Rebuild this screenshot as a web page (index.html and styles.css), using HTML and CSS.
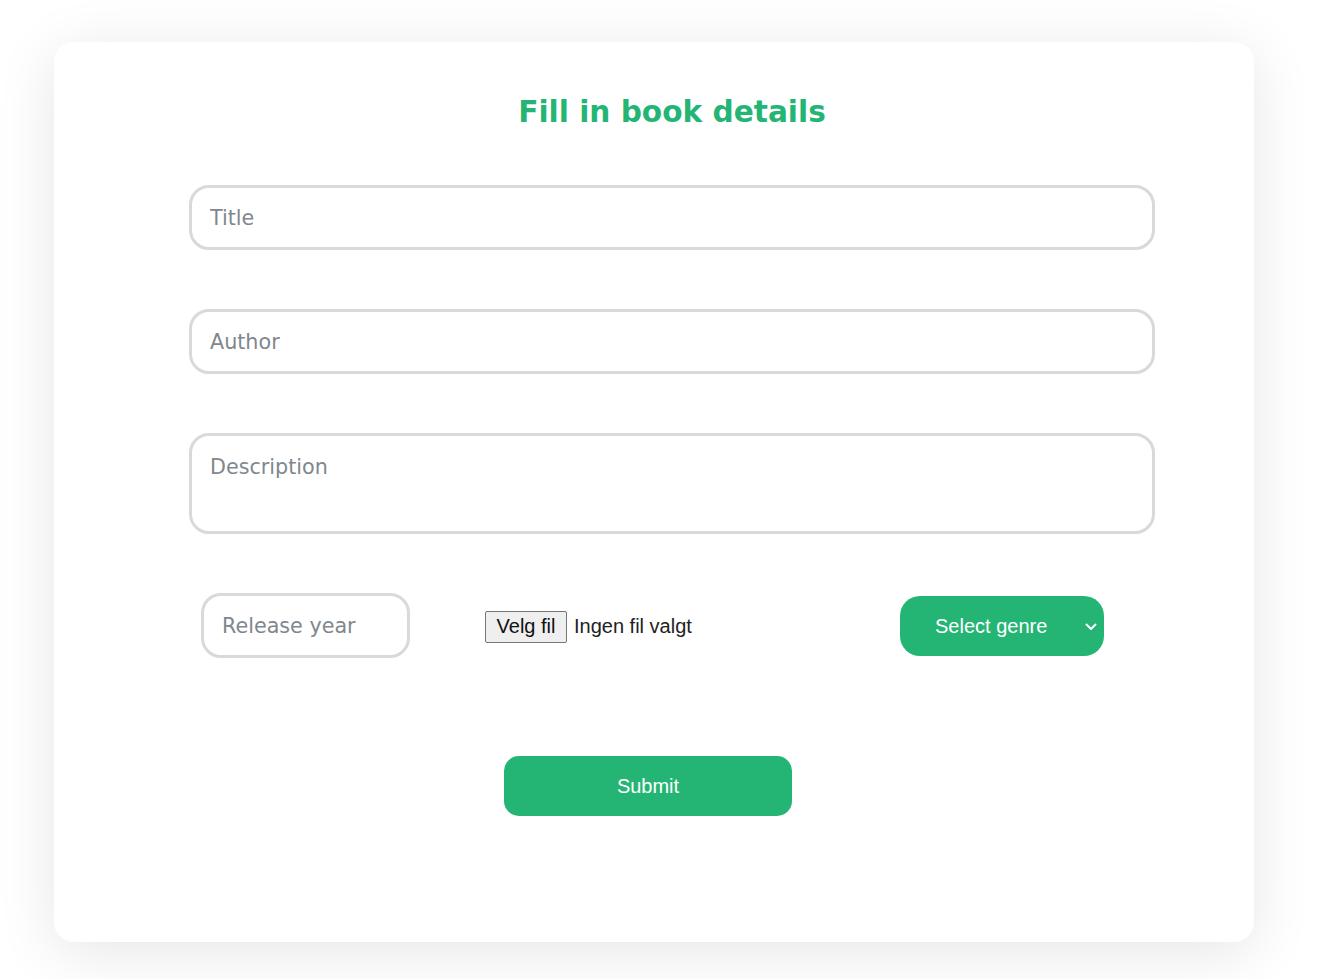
FILE: index.html
```html
<!DOCTYPE html>
<html lang="en">
<head>
<meta charset="utf-8">
<title>Fill in book details</title>
<link rel="stylesheet" href="styles.css">
</head>
<body>
<div class="page">
  <div class="card">
    <form class="form">
      <h1 class="heading">Fill in book details</h1>
      <input class="field" type="text" placeholder="Title">
      <input class="field" type="text" placeholder="Author">
      <textarea class="field area" placeholder="Description"></textarea>
      <div class="row">
        <input class="field year" type="text" placeholder="Release year">
        <div class="file">
          <span class="file-btn">Velg fil</span>
          <span class="file-text">Ingen fil valgt</span>
        </div>
        <div class="select">
          <span class="select-label">Select genre</span>
          <svg class="chev" width="12" height="8" viewBox="0 0 12 8"><path d="M1.5 1.5 L6 6 L10.5 1.5" fill="none" stroke="#fff" stroke-width="2" stroke-linecap="round" stroke-linejoin="round"/></svg>
        </div>
      </div>
      <div class="submit-row">
        <button type="button" class="submit">Submit</button>
      </div>
    </form>
  </div>
</div>
</body>
</html>
```

FILE: styles.css
```css
html, body {
  margin: 0;
  padding: 0;
  background: #ffffff;
}
.page {
  padding: 42px 0 0 54px;
  height: 979px;
  box-sizing: border-box;
}
.card {
  width: 1200px;
  height: 900px;
  box-sizing: border-box;
  background: #ffffff;
  border-radius: 20px;
  box-shadow: 0 10px 60px rgba(0, 0, 0, 0.1);
  padding: 52px 0 0 135px;
}
.form {
  width: 966px;
  display: flex;
  flex-direction: column;
}
.heading {
  margin: 0 0 55px 0;
  font-family: "DejaVu Sans", Verdana, sans-serif;
  font-weight: bold;
  font-size: 29.6px;
  line-height: 36px;
  color: #24b574;
  text-align: center;
}
.field {
  display: block;
  box-sizing: border-box;
  width: 966px;
  height: 65px;
  border: 3px solid #d9d9d9;
  border-radius: 20px;
  padding: 0 18px;
  margin: 0 0 59px 0;
  font-family: "DejaVu Sans", Verdana, sans-serif;
  font-size: 20.7px;
  color: #333;
  background: #fff;
  outline: none;
}
.field::placeholder {
  color: #80878e;
}
.area {
  height: 101px;
  padding-top: 19px;
  resize: none;
}
.row {
  display: flex;
  align-items: center;
  height: 65px;
  padding-left: 12px;
}
.year {
  width: 209px;
  margin: 0;
}
.file {
  display: flex;
  align-items: center;
  margin-left: 75px;
  width: 415px;
  padding-top: 2px;
  font-family: "Liberation Sans", Arial, sans-serif;
  font-size: 20px;
  color: #222;
}
.file-btn {
  box-sizing: border-box;
  height: 32px;
  width: 82px;
  display: flex;
  align-items: center;
  justify-content: center;
  background: #efefef;
  border: 1px solid #767676;
  border-radius: 2px;
  color: #111;
}
.file-text {
  margin-left: 7px;
}
.select {
  box-sizing: border-box;
  width: 204px;
  height: 60px;
  border-radius: 20px;
  background: #24b574;
  color: #fff;
  font-family: "Liberation Sans", Arial, sans-serif;
  font-size: 20px;
  display: flex;
  align-items: center;
  padding-left: 35px;
  padding-right: 7px;
  padding-top: 2px;
}
.select-label {
  flex: 1;
}
.chev {
  display: block;
}
.submit-row {
  display: flex;
  margin-top: 98px;
  padding-left: 315px;
}
.submit {
  width: 288px;
  height: 60px;
  border: none;
  border-radius: 15px;
  background: #24b574;
  color: #fff;
  font-family: "Liberation Sans", Arial, sans-serif;
  font-size: 20px;
  padding: 0;
}
```
